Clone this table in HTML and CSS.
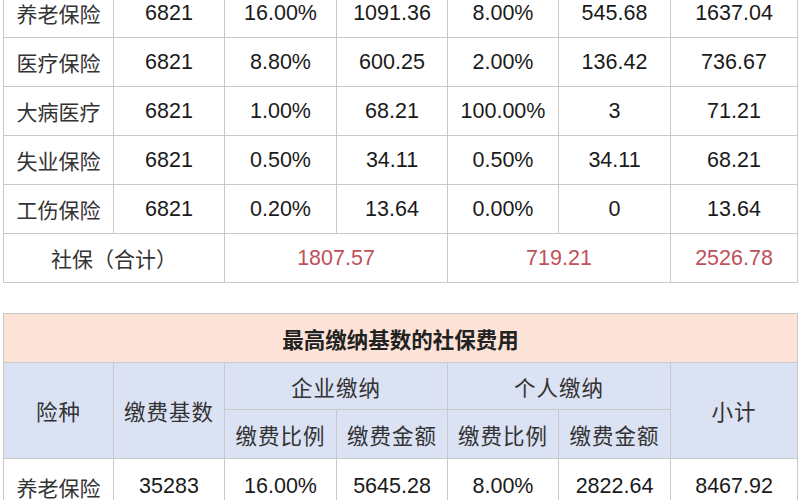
FILE: index.html
```html
<!DOCTYPE html>
<html lang="zh">
<head>
<meta charset="utf-8">
<link rel="stylesheet" href="styles.css">
</head>
<body>
<div class="page">
<table class="grid top">
<colgroup><col class="c1"><col class="c2"><col class="c3"><col class="c4"><col class="c5"><col class="c6"><col class="c7"></colgroup>
<tbody>
<tr><td class="lbl">养老保险</td><td>6821</td><td>16.00%</td><td>1091.36</td><td>8.00%</td><td>545.68</td><td>1637.04</td></tr>
<tr><td class="lbl">医疗保险</td><td>6821</td><td>8.80%</td><td>600.25</td><td>2.00%</td><td>136.42</td><td>736.67</td></tr>
<tr><td class="lbl">大病医疗</td><td>6821</td><td>1.00%</td><td>68.21</td><td>100.00%</td><td>3</td><td>71.21</td></tr>
<tr><td class="lbl">失业保险</td><td>6821</td><td>0.50%</td><td>34.11</td><td>0.50%</td><td>34.11</td><td>68.21</td></tr>
<tr><td class="lbl">工伤保险</td><td>6821</td><td>0.20%</td><td>13.64</td><td>0.00%</td><td>0</td><td>13.64</td></tr>
<tr><td class="lbl" colspan="2">社保（合计）</td><td class="red" colspan="2">1807.57</td><td class="red" colspan="2">719.21</td><td class="red">2526.78</td></tr>
</tbody>
</table>

<table class="grid bottom">
<colgroup><col class="c1"><col class="c2"><col class="c3"><col class="c4"><col class="c5"><col class="c6"><col class="c7"></colgroup>
<thead>
<tr class="title"><th colspan="7">最高缴纳基数的社保费用</th></tr>
<tr class="head h1"><th rowspan="2">险种</th><th rowspan="2">缴费基数</th><th colspan="2">企业缴纳</th><th colspan="2">个人缴纳</th><th rowspan="2">小计</th></tr>
<tr class="head h2"><th>缴费比例</th><th>缴费金额</th><th>缴费比例</th><th>缴费金额</th></tr>
</thead>
<tbody>
<tr><td class="lbl">养老保险</td><td>35283</td><td>16.00%</td><td>5645.28</td><td>8.00%</td><td>2822.64</td><td>8467.92</td></tr>
</tbody>
</table>
</div>
</body>
</html>
```

FILE: styles.css
```css
html, body {
  margin: 0;
  padding: 0;
  background: #ffffff;
  overflow: hidden;
}
.page {
  width: 800px;
  height: 500px;
  overflow: hidden;
  padding-left: 3px;
  box-sizing: border-box;
}
.grid {
  border-collapse: collapse;
  table-layout: fixed;
  width: 794px;
  font-family: "Liberation Sans", "Noto Sans CJK SC", sans-serif;
  font-size: 21.5px;
  color: #1a1a1a;
}
.c1 { width: 110px; }
.c2 { width: 111px; }
.c3 { width: 112px; }
.c4 { width: 111px; }
.c5 { width: 111px; }
.c6 { width: 112px; }
.c7 { width: 127px; }
.grid td, .grid th {
  border: 1px solid #c9c9c9;
  text-align: center;
  vertical-align: middle;
  padding: 0;
  font-weight: normal;
  white-space: nowrap;
}
.top {
  margin-top: -12px;
}
.top tr {
  height: 49px;
}
.lbl {
  color: #333333;
  font-family: "Noto Sans CJK SC", sans-serif;
  font-size: 21px;
}
.red {
  color: #c0505a;
}
.bottom {
  margin-top: 30px;
}
.title th {
  background: #fde3d7;
  height: 48px;
  font-family: "Noto Sans CJK SC", sans-serif;
  font-weight: bold;
  font-size: 21.5px;
  color: #222222;
}
.head th {
  background: #dbe2f3;
  font-family: "Noto Sans CJK SC", sans-serif;
  font-size: 21.5px;
  color: #333333;
  letter-spacing: 1px;
}
.h1 { height: 47px; }
.h2 { height: 49px; }
.bottom tbody tr { height: 52px; }
.bottom tbody td { padding-top: 4px; }
```
